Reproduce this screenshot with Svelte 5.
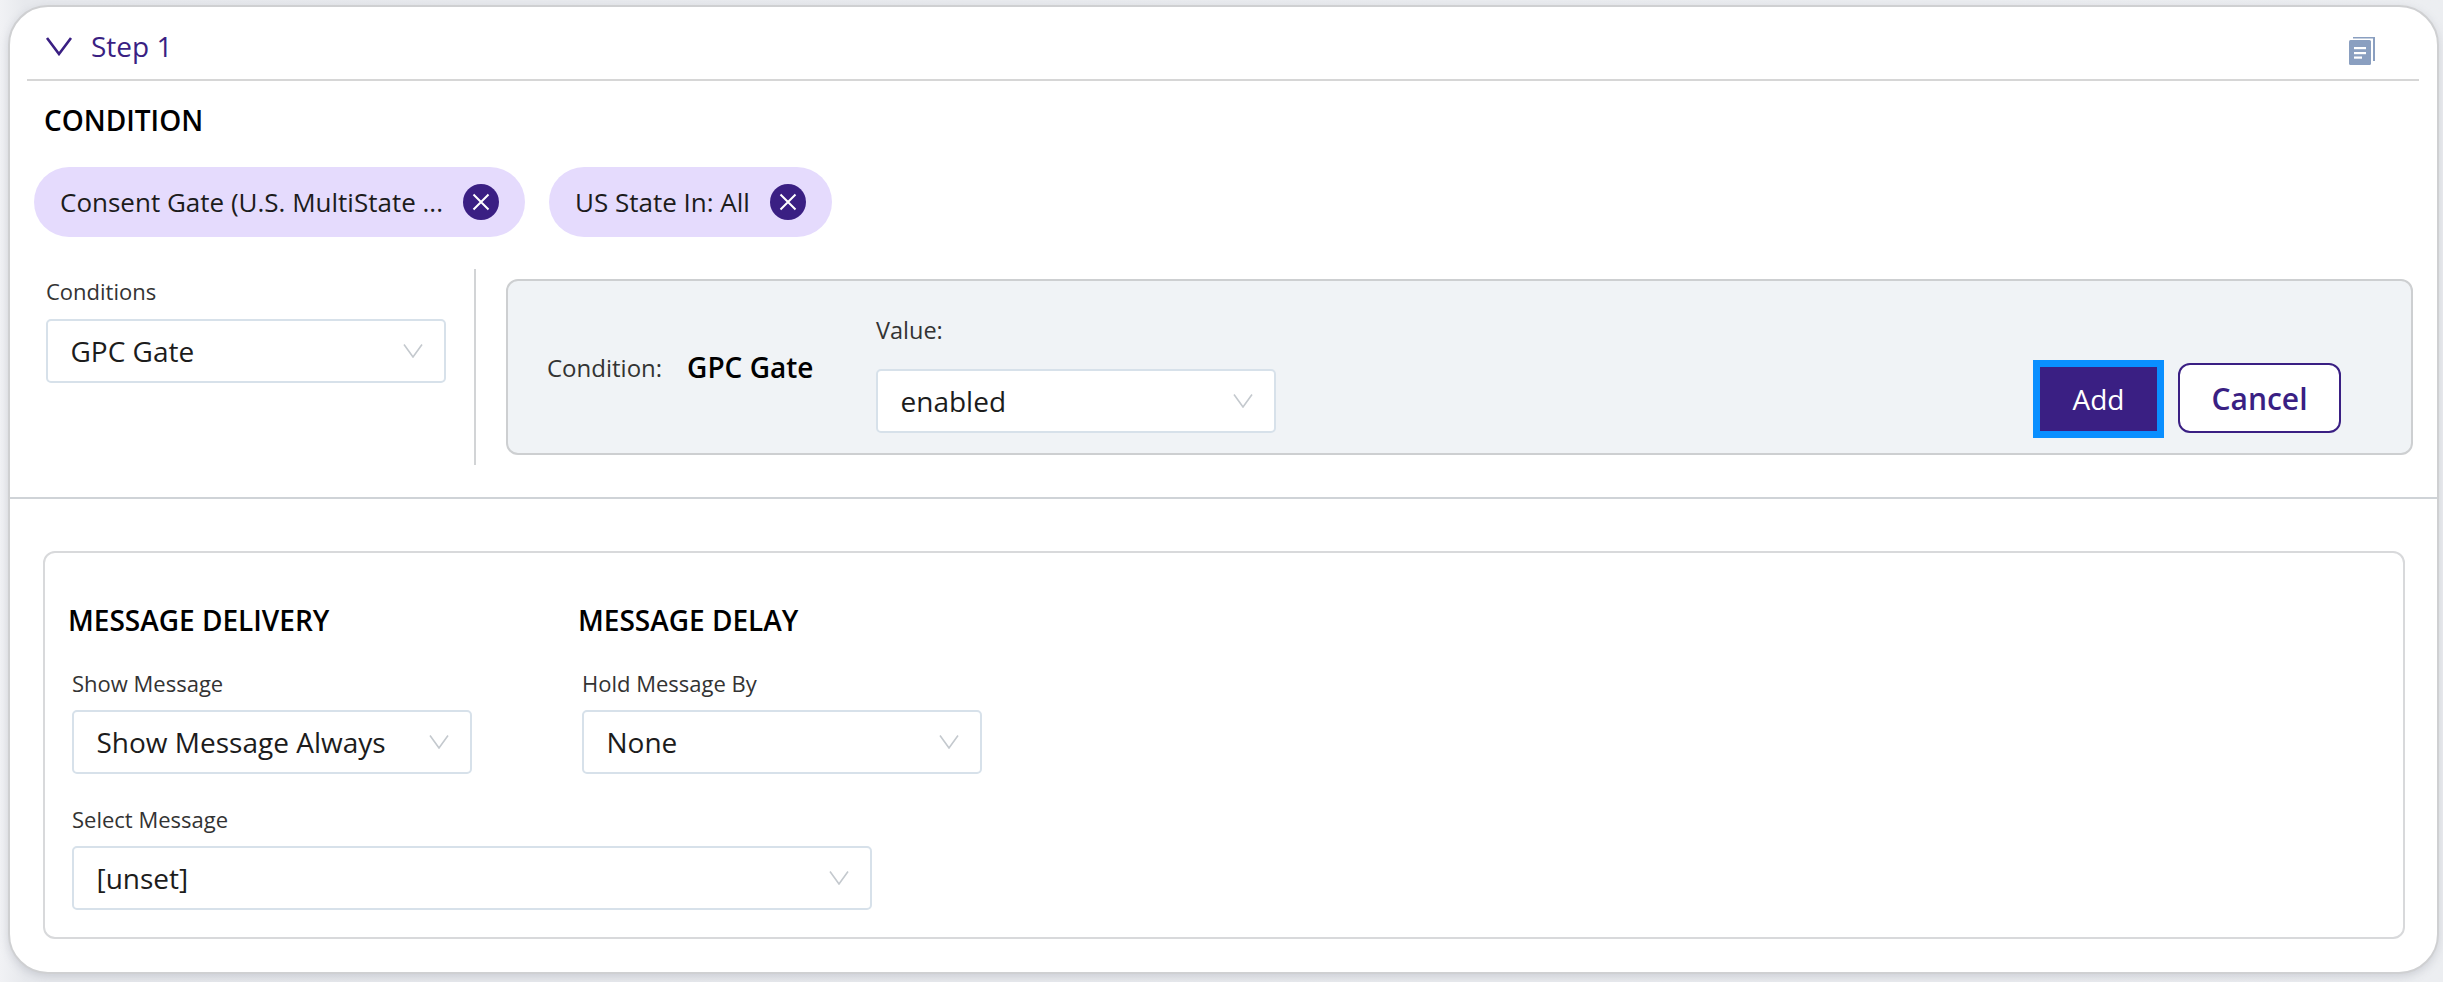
<script lang="ts">
  const chips = [
    { label: 'Consent Gate (U.S. MultiState ...', width: 491 },
    { label: 'US State In: All', width: 283 }
  ];
</script>

{#snippet chevron()}
  <svg class="chev" viewBox="0 0 20 14" width="20" height="14" aria-hidden="true">
    <path d="M1 0.5 L10 13 L19 0.5" fill="none" stroke="#c4c9ce" stroke-width="1.6" />
  </svg>
{/snippet}

{#snippet select(value: string, cls: string)}
  <div class="select {cls}">
    <span>{value}</span>
    {@render chevron()}
  </div>
{/snippet}

<div class="page">
  <div class="card">
    <div class="step-head">
      <div class="step-title">
        <svg viewBox="0 0 28 20" width="28" height="20" aria-hidden="true">
          <path d="M2 2 L14 18 L26 2" fill="none" stroke="#3a1f83" stroke-width="2.6" />
        </svg>
        <span>Step 1</span>
      </div>
      <svg class="copy" viewBox="0 0 26 28" width="26" height="28" aria-hidden="true">
        <path d="M4 0 H26 V24 H24 V1.6 H4 Z" fill="#8a9fc0" />
        <rect x="0" y="3" width="22" height="25" rx="1.5" fill="#8a9fc0" />
        <rect x="5" y="10" width="12" height="2.2" fill="#fff" />
        <rect x="5" y="15" width="12" height="2.2" fill="#fff" />
        <rect x="5" y="19.5" width="8" height="2.2" fill="#fff" />
      </svg>
    </div>

    <section class="condition">
      <h2>CONDITION</h2>
      <div class="chips">
        {#each chips as chip}
          <div class="chip" style="width: {chip.width}px">
            <span>{chip.label}</span>
            <svg viewBox="0 0 36 36" width="36" height="36" aria-hidden="true">
              <circle cx="18" cy="18" r="18" fill="#3a1f83" />
              <path d="M10.5 10.5 L25.5 25.5 M25.5 10.5 L10.5 25.5" stroke="#fff" stroke-width="2" />
            </svg>
          </div>
        {/each}
      </div>
      <div class="builder">
        <div class="picker">
          <div class="field-label">Conditions</div>
          {@render select('GPC Gate', 'w400')}
        </div>
        <div class="panel">
          <div class="cond-name">
            <span class="cond-label">Condition:</span>
            <strong>GPC Gate</strong>
          </div>
          <div class="value-field">
            <div class="field-label">Value:</div>
            {@render select('enabled', 'w400')}
          </div>
          <div class="actions">
            <button class="btn-add">Add</button>
            <button class="btn-cancel">Cancel</button>
          </div>
        </div>
      </div>
    </section>

    <section class="delivery">
      <div class="delivery-box">
        <div class="columns">
          <div class="col-delivery">
            <h2>MESSAGE DELIVERY</h2>
            <div class="field-label">Show Message</div>
            {@render select('Show Message Always', 'w400')}
          </div>
          <div class="col-delay">
            <h2>MESSAGE DELAY</h2>
            <div class="field-label">Hold Message By</div>
            {@render select('None', 'w400')}
          </div>
        </div>
        <div class="select-message">
          <div class="field-label">Select Message</div>
          {@render select('[unset]', 'w800')}
        </div>
      </div>
    </section>
  </div>
</div>

<style>
  :global(body) {
    margin: 0;
    background: #e9ebef;
  }

  .page {
    box-sizing: border-box;
    width: 2443px;
    height: 982px;
    padding: 5px 4px 8px 8px;
    background: linear-gradient(90deg, #f1f2f5, #e7e9ed 1%, #eceef1);
    font-family: "Open Sans", sans-serif;
    color: #1c1c1c;
  }

  .card {
    box-sizing: border-box;
    height: 969px;
    background: #fff;
    border: 2px solid #cfd0d2;
    border-radius: 40px;
    box-shadow: 0 3px 8px rgba(120, 125, 140, 0.25);
    overflow: hidden;
  }

  .step-head {
    box-sizing: border-box;
    height: 74px;
    margin: 0 18px 0 17px;
    padding: 6px 44px 0 18px;
    display: flex;
    align-items: center;
    justify-content: space-between;
    border-bottom: 2px solid #d6d6d6;
  }

  .step-title {
    display: flex;
    align-items: center;
    gap: 18px;
    color: #3a1f83;
    font-size: 28px;
  }

  .copy {
    margin-top: 10px;
  }

  h2 {
    margin: 0;
    font-size: 28px;
    line-height: 36px;
    font-weight: 600;
    color: #000;
  }

  .condition {
    box-sizing: border-box;
    height: 418px;
    padding: 0 24px 0 0;
    border-bottom: 2px solid #cfd3d7;
  }

  .condition h2 {
    padding: 21px 0 0 34px;
  }

  .chips {
    display: flex;
    gap: 24px;
    margin: 29px 0 0 24px;
  }

  .chip {
    box-sizing: border-box;
    height: 70px;
    padding: 0 26px;
    display: flex;
    align-items: center;
    justify-content: space-between;
    background: #e5dbfd;
    border-radius: 35px;
    font-size: 26px;
    color: #1c1c1c;
    white-space: nowrap;
  }

  .builder {
    display: flex;
    margin: 32px 0 0 36px;
    height: 196px;
  }

  .picker {
    box-sizing: border-box;
    width: 430px;
    border-right: 2px solid #d2d4d6;
    padding-top: 7px;
    flex: none;
  }

  .field-label {
    font-size: 22px;
    line-height: 30px;
    color: #333;
    margin-bottom: 12px;
  }

  .picker .field-label {
    margin-bottom: 13px;
  }

  .select {
    box-sizing: border-box;
    height: 64px;
    display: flex;
    align-items: center;
    justify-content: space-between;
    padding: 0 21px 0 22.5px;
    background: #fff;
    border: 2px solid #d7e1ea;
    border-radius: 5px;
    font-size: 28px;
    color: #1c1c1c;
  }

  .w400 {
    width: 400px;
  }

  .w800 {
    width: 800px;
  }

  .panel {
    box-sizing: border-box;
    flex: 1;
    height: 176px;
    margin: 10px 0 0 30px;
    display: flex;
    align-items: stretch;
    background: #f0f3f6;
    border: 2px solid #cdcfd1;
    border-radius: 12px;
  }

  .cond-name {
    display: flex;
    align-items: center;
    padding: 0 0 0 39px;
    width: 368px;
    box-sizing: border-box;
    flex: none;
    gap: 25px;
  }

  .cond-label {
    font-size: 24px;
    color: #333;
  }

  .cond-name strong {
    font-size: 28px;
    font-weight: 600;
    color: #000;
  }

  .value-field {
    padding-top: 34px;
  }

  .value-field .field-label {
    font-size: 23.5px;
    margin-bottom: 24px;
  }

  .actions {
    margin-left: auto;
    margin-right: 70px;
    padding-top: 82px;
    display: flex;
    align-items: flex-start;
    gap: 21px;
  }

  button {
    box-sizing: border-box;
    font-family: inherit;
    font-size: 30px;
    height: 70px;
    cursor: pointer;
  }

  .btn-add {
    width: 117px;
    height: 64px;
    margin: 4px 0 0 0;
    background: #3a1f83;
    color: #fff;
    border: 0;
    border-radius: 0;
    outline: 7px solid #0a8fff;
    font-size: 28px;
  }

  .btn-cancel {
    width: 163px;
    background: #fff;
    color: #3a1f83;
    border: 2px solid #3a1f83;
    border-radius: 12px;
    font-weight: 600;
  }

  .delivery {
    padding: 52px 32px 0 33px;
  }

  .delivery-box {
    box-sizing: border-box;
    height: 388px;
    padding: 49px 0 0 23px;
    border: 2px solid #d8d9db;
    border-radius: 12px;
  }

  .columns {
    display: flex;
  }

  .col-delivery {
    width: 510px;
  }

  .col-delivery .field-label,
  .col-delay .field-label,
  .select-message .field-label {
    padding-left: 4px;
  }

  .col-delivery h2,
  .col-delay h2 {
    margin-bottom: 30px;
  }

  .col-delivery .select,
  .col-delay .select,
  .select-message .select {
    margin-left: 4px;
  }

  .select-message {
    margin-top: 30px;
  }
</style>
